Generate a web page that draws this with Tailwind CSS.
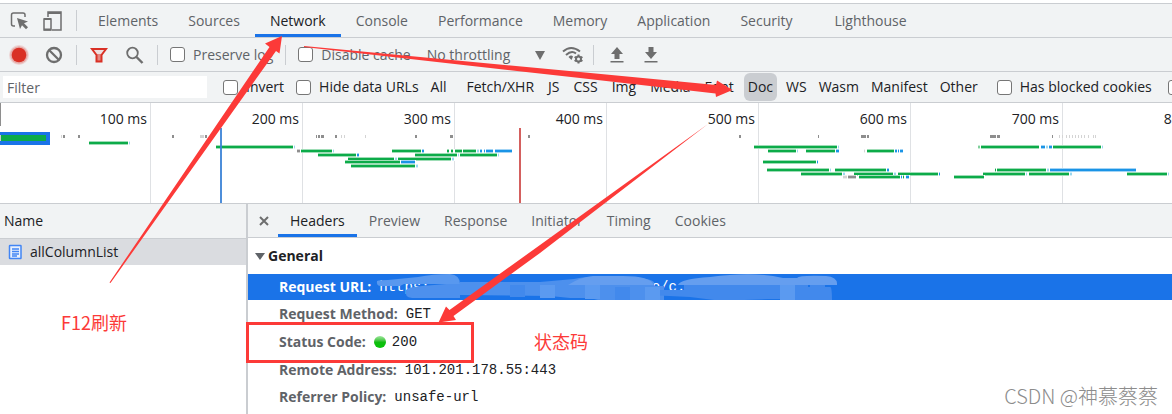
<!DOCTYPE html>
<html lang="zh-CN">
<head>
  <meta charset="UTF-8" />
  <meta name="viewport" content="width=device-width, initial-scale=1.0"/>
  <title>DevTools - Network</title>
  <script src="https://cdn.jsdelivr.net/npm/@tailwindcss/browser@4"></script>
</head>
<body class="relative flex flex-col min-h-screen overflow-x-hidden bg-white pt-[3px] font-['Open_Sans','Noto_Sans_CJK_SC',sans-serif] text-sm leading-5 text-[#202124]">

  <!-- Main tabs -->
  <nav class="flex h-[35px] items-stretch border-y border-[#cacdd1] bg-[#f1f3f4] text-[#5f6368] whitespace-nowrap">
    <button aria-label="Inspect" class="ml-2.5 flex items-center">
      <svg width="20" height="20" viewBox="0 0 20 20" fill="none" stroke="#6e6e6e" stroke-width="1.5">
        <path d="M5 15H3.500Q1.500 15 1.500 13V4Q1.500 2 3.500 2H13Q15 2 15 4V6"/>
        <path d="M7 7l11 3.500-4 1.700 4 4-2 2-4-4L10 18z" fill="#6e6e6e" stroke="none"/>
      </svg>
    </button>
    <button aria-label="Device toolbar" class="ml-3 flex items-center">
      <svg width="22" height="22" viewBox="0 0 22 22" fill="none" stroke="#6e6e6e">
        <path d="M6 7V2h13v18H10" stroke-width="1.500"/>
        <path d="M6 3h13" stroke-width="2"/>
        <rect x="2" y="9" width="7" height="11" stroke-width="1.500"/>
        <path d="M2 9h7M2 19.500h7" stroke-width="2"/>
      </svg>
    </button>
    <span class="ml-3 mr-1.5 my-1.5 w-px bg-[#cacdd1]"></span>
    <button class="px-[15px]">Elements</button>
    <button class="px-[15px]">Sources</button>
    <button class="border-b-3 border-[#1a73e8] px-[15px] pt-[3px] text-[#202124]">Network</button>
    <button class="px-[15px]">Console</button>
    <button class="px-[15px]">Performance</button>
    <button class="px-[15px]">Memory</button>
    <button class="px-[15px]">Application</button>
    <button class="px-[15px]">Security</button>
    <button class="ml-3 px-[15px]">Lighthouse</button>
  </nav>

  <!-- Toolbar -->
  <div class="flex h-[34px] items-center border-b border-[#cacdd1] bg-[#f1f3f4] text-[#5f6368] whitespace-nowrap">
    <button aria-label="Record" class="ml-2">
      <svg width="22" height="22" viewBox="0 0 22 22"><circle cx="11" cy="11" r="10" fill="#d93025" opacity=".15"/><circle cx="11" cy="11" r="8.800" fill="#d93025" opacity=".25"/><circle cx="11" cy="11" r="7.300" fill="#d93025"/></svg>
    </button>
    <button aria-label="Clear" class="ml-3.5">
      <svg width="20" height="20" viewBox="0 0 20 20" fill="none" stroke="#6e6e6e" stroke-width="2.300"><circle cx="10" cy="10" r="7"/><path d="M5 5l10 10"/></svg>
    </button>
    <span class="ml-3 h-5 w-px bg-[#cacdd1]"></span>
    <button aria-label="Filter" class="ml-3">
      <svg width="20" height="20" viewBox="0 0 20 20"><path d="M3 4h14l-4.500 6v6.500h-5V10z" fill="#d93025" fill-opacity=".1" stroke="#d93025" stroke-width="2"/><path d="M6 9h8l-2 2v5H8v-5z" fill="#d93025" opacity=".5"/></svg>
    </button>
    <button aria-label="Search" class="ml-4">
      <svg width="20" height="20" viewBox="0 0 20 20" fill="none" stroke="#6e6e6e"><circle cx="7.500" cy="8" r="5.300" stroke-width="1.800"/><path d="M11.500 12l6 6" stroke-width="2.400"/></svg>
    </button>
    <span class="ml-3 h-5 w-px bg-[#cacdd1]"></span>
    <label class="ml-3 flex items-center gap-2"><input type="checkbox" class="size-[15px] appearance-none rounded-[3px] border border-[#767676] bg-white">Preserve log</label>
    <span class="ml-3 h-5 w-px bg-[#cacdd1]"></span>
    <label class="ml-3 flex items-center gap-2"><input type="checkbox" class="size-[15px] appearance-none rounded-[3px] border border-[#767676] bg-white">Disable cache</label>
    <div class="relative ml-4 w-[118px]">
      <select aria-label="Throttling" class="w-full appearance-none bg-transparent"><option>No throttling</option></select>
      <svg class="pointer-events-none absolute right-0 top-1.5" width="10" height="9" viewBox="0 0 10 9"><path d="M0 0h10L5 9z" fill="#6e6e6e"/></svg>
    </div>
    <button aria-label="Network conditions" class="ml-4">
      <svg width="24" height="20" viewBox="0 0 24 20" fill="none" stroke="#6e6e6e" stroke-width="2">
        <path d="M2 6.500Q10 -.5 19 6.500M5 10Q10.500 5 15 8.500"/>
        <path d="M7.500 12Q10 9.500 12 11.500L10.500 15z" fill="#6e6e6e" stroke="none"/>
        <circle cx="17.500" cy="14" r="2.500"/>
        <path d="M17.500 9.500v2M17.500 16.500v2M13.600 11.800l1.800 1M19.600 15.200l1.800 1M13.600 16.200l1.800-1M19.600 12.800l1.800-1"/>
      </svg>
    </button>
    <span class="ml-2 h-5 w-px bg-[#cacdd1]"></span>
    <button aria-label="Import HAR" class="ml-4">
      <svg width="14" height="16" viewBox="0 0 14 16" fill="#6e6e6e"><path d="M7 0l6 7H9.500v5h-5V7H1zM.5 14h13v1.500H.5z"/></svg>
    </button>
    <button aria-label="Export HAR" class="ml-5">
      <svg width="14" height="16" viewBox="0 0 14 16" fill="#6e6e6e"><path d="M4.500 0h5v5H13l-6 7-6-7h3.500zM.5 14h13v1.500H.5z"/></svg>
    </button>
  </div>

  <!-- Filter bar -->
  <div class="flex h-[31px] items-center overflow-hidden border-b border-[#cacdd1] bg-[#f1f3f4] whitespace-nowrap">
    <input type="text" aria-label="Filter" placeholder="Filter" class="ml-[3px] h-[22px] w-[204px] shrink-0 bg-white px-1 placeholder:text-[#5f6368]">
    <label class="ml-4 flex items-center gap-2"><input type="checkbox" class="size-[15px] appearance-none rounded-[3px] border border-[#767676] bg-white">Invert</label>
    <label class="ml-3 flex items-center gap-2"><input type="checkbox" class="size-[15px] appearance-none rounded-[3px] border border-[#767676] bg-white">Hide data URLs</label>
    <button class="ml-2 px-1">All</button>
    <span class="mx-1.5 h-5 w-0.5 bg-[#cacdd1]"></span>
    <div class="flex items-center gap-1.5">
      <button class="px-1">Fetch/XHR</button>
      <button class="px-1">JS</button>
      <button class="px-1">CSS</button>
      <button class="px-1">Img</button>
      <button class="px-1">Media</button>
      <button class="px-1">Font</button>
      <button class="h-7 rounded-md bg-[#cacdd1] px-1">Doc</button>
      <button class="px-[3px]">WS</button>
      <button class="px-[3px]">Wasm</button>
      <button class="px-[3px]">Manifest</button>
      <button class="px-[3px]">Other</button>
    </div>
    <label class="ml-4 flex items-center gap-2"><input type="checkbox" class="size-[15px] appearance-none rounded-[3px] border border-[#767676] bg-white">Has blocked cookies</label>
    <input type="checkbox" aria-label="Blocked Requests" class="ml-4 size-[15px] shrink-0 appearance-none rounded-[3px] border border-[#767676] bg-white">
  </div>

  <!-- Timeline overview -->
  <div class="relative flex h-[101px] overflow-hidden border-b border-[#cacdd1] bg-white text-right whitespace-nowrap">
    <div class="w-[151px] shrink-0 border-r border-[#dfe1e4] pr-[3px] pt-1.5">100 ms</div>
    <div class="w-[152px] shrink-0 border-r border-[#dfe1e4] pr-[3px] pt-1.5">200 ms</div>
    <div class="w-[152px] shrink-0 border-r border-[#dfe1e4] pr-[3px] pt-1.5">300 ms</div>
    <div class="w-[152px] shrink-0 border-r border-[#dfe1e4] pr-[3px] pt-1.5">400 ms</div>
    <div class="w-[152px] shrink-0 border-r border-[#dfe1e4] pr-[3px] pt-1.5">500 ms</div>
    <div class="w-[152px] shrink-0 border-r border-[#dfe1e4] pr-[3px] pt-1.5">600 ms</div>
    <div class="w-[152px] shrink-0 border-r border-[#dfe1e4] pr-[3px] pt-1.5">700 ms</div>
    <div class="w-[152px] shrink-0 border-r border-[#dfe1e4] pr-[3px] pt-1.5">800 ms</div>
    <svg id="overview" class="absolute left-0 top-0" width="1172" height="100"></svg>
  </div>

  <!-- Requests and details -->
  <div class="flex flex-1">
    <section class="w-[248px] shrink-0 border-r-2 border-[#cacdd1]">
      <div class="flex h-[35px] items-center border-b border-[#cacdd1] bg-[#f1f3f4] px-1">Name</div>
      <a href="#" class="flex h-[26px] items-center gap-2 bg-[#dadce0] pl-2">
        <svg width="14" height="16" viewBox="0 0 14 16" fill="#e8f0fe" stroke="#4285f4" stroke-width="1.500"><rect x="1.500" y="1.500" width="11.500" height="13" rx=".5"/><path d="M4 5h7M4 7.500h7M4 10h7M4 12h5"/></svg>
        allColumnList
      </a>
    </section>

    <section class="flex-1 min-w-0">
      <nav class="flex h-[34px] items-stretch border-b border-[#cacdd1] bg-[#f1f3f4] text-[#5f6368]">
        <button aria-label="Close" class="ml-2.5 mr-2 flex items-center">
          <svg width="12" height="12" viewBox="0 0 12 12" stroke="#6e6e6e" stroke-width="2"><path d="M2 2l8 8M10 2l-8 8"/></svg>
        </button>
        <button class="border-b-3 border-[#1a73e8] px-3 pt-[3px] text-[#202124]">Headers</button>
        <button class="px-3">Preview</button>
        <button class="px-3">Response</button>
        <button class="px-3">Initiator</button>
        <button class="px-3">Timing</button>
        <button class="px-3">Cookies</button>
      </nav>
      <h2 class="flex h-9 items-center gap-[3px] pl-[7px] font-bold">
        <svg width="10" height="7" viewBox="0 0 10 7"><path d="M0 0h10L5 7z" fill="#5f6368"/></svg>
        General
      </h2>
      <dl class="whitespace-nowrap">
        <div class="relative flex h-[26px] items-center gap-2 overflow-hidden bg-[#1a73e8] pl-[31px] text-white">
          <dt class="font-bold">Request URL:</dt>
          <dd class="font-['Liberation_Mono',monospace]">https:<span class="ml-[222px]">e/c.</span></dd>
          <svg class="absolute left-0 top-0" width="600" height="26" fill="#4d90ed">
            <path d="M129 7Q132 6 140 6L170 3Q185 0 202 0Q212 1 212 10H156L152 12H133Q128 12 129 7z" fill="#5898ef"/>
            <path d="M158 16q2-3 16-4l24-2h14V24H164q-8-1-6-8z"/>
            <path d="M212 8h80l34-3Q345 1 370 3q30 0 36 5v4h10v14H350l-8-2h-20l-20-2-90-1z"/>
            <path d="M400 16h36V11H560v2h22q2-1 2 13h-38l-6-1h-20l-24 1h-30l-24-3-42-2z" fill="#4289ec"/>
            <path d="M430 11Q432 5 462 3q45-6 73 1h14q2-3 29-2 12 1 11 9z" fill="#659eef"/>
            <path d="M320 11Q332 3 345 2h30q27 0 31 9z" fill="#659eef"/>
            <path d="M292 11h15v13h-15zM337 11h15v14h-15zM397 13h15v13h-15zM532 11h15v15h-15z" fill="#5b9af0"/>
            <path d="M262 11h15v12h-15zM367 13h15v13h-15zM472 11h18v14h-18zM562 11h15v15h-15z" fill="#4289ec"/>
          </svg>
        </div>
        <div class="flex h-7 items-center gap-2 pl-[31px]"><dt class="font-bold text-[#5f6368]">Request Method:</dt><dd class="font-['Liberation_Mono',monospace]">GET</dd></div>
        <div class="flex h-7 items-center gap-2 pl-[31px]">
          <dt class="font-bold text-[#5f6368]">Status Code:</dt>
          <dd class="flex items-center gap-1.5 font-['Liberation_Mono',monospace]"><span class="size-3 rounded-full bg-linear-to-b from-[#9be79b] via-[#0fbd0f] to-[#08c408]"></span>200</dd>
        </div>
        <div class="flex h-[27px] items-center gap-2 pl-[31px]"><dt class="font-bold text-[#5f6368]">Remote Address:</dt><dd class="font-['Liberation_Mono',monospace]">101.201.178.55:443</dd></div>
        <div class="flex h-[27px] items-center gap-2 pl-[31px]"><dt class="font-bold text-[#5f6368]">Referrer Policy:</dt><dd class="font-['Liberation_Mono',monospace]">unsafe-url</dd></div>
      </dl>
    </section>
  </div>

  <!-- Annotations -->
  <svg class="pointer-events-none absolute left-0 top-0" width="1172" height="414" fill="#fc3a38">
    <path d="M109.500 282.500L269.500 47 265 43.500 282 36 279.500 53.500 276 51 110.500 283z"/>
    <path d="M304 46L580 72 716 85 717 80.500 732.500 90 716 97 715.500 93.500 580 78 304 47z"/>
    <path d="M708 124L540 245 449.500 310 446 306.500 438.500 322.500 456 320 453.500 316 540 253z"/>
    <rect x="247.500" y="323.500" width="225" height="38" fill="none" stroke="#fc3a38" stroke-width="3"/>
  </svg>
  <p class="absolute left-[61px] top-[310px] text-lg leading-6 text-[#fc3a38] font-['Noto_Sans_CJK_SC',sans-serif]">F12刷新</p>
  <p class="absolute left-[534px] top-[329px] text-lg leading-6 text-[#fc3a38] font-['Noto_Sans_CJK_SC',sans-serif]">状态码</p>
  <p class="absolute right-[14px] top-[384px] text-xl leading-6 font-light text-[#8c8c8c] font-['Noto_Sans_CJK_SC',sans-serif]">CSDN @神慕蔡蔡</p>

  <script>
    const overview = document.getElementById("overview");
    const colors = { g: "#0cab49", b: "#1a94e6", l: "#9ad7ee", s: "#8e8e8e", t: "#d4d4d4", p: "#7fd09b" };
    const rowTops = [38, 42, 46, 50, 54, 57, 61, 65, 69, 72];

    // [row, start, end, color]
    const bars = [
      [0, 89, 128, "g"], [0, 129, 130, "l"],
      [1, 216, 293, "g"], [1, 294, 295, "l"], [1, 754, 837, "g"], [1, 838, 839, "l"],
      [1, 978, 981, "p"], [1, 981, 1039, "g"], [1, 1041, 1046, "b"], [1, 1046, 1049, "l"], [1, 1049, 1052, "b"], [1, 1053, 1101, "g"], [1, 1102, 1103, "l"],
      [2, 297, 300, "s"], [2, 301, 333, "g"], [2, 333, 334, "l"], [2, 392, 421, "g"], [2, 422, 424, "b"], [2, 447, 449, "g"], [2, 451, 453, "g"],
      [2, 455, 462, "g"], [2, 463, 476, "g"], [2, 477, 479, "l"], [2, 480, 482, "b"], [2, 484, 485, "b"], [2, 486, 493, "b"], [2, 495, 512, "b"],
      [2, 768, 796, "g"], [2, 797, 798, "l"], [2, 806, 836, "g"], [2, 836, 839, "b"], [2, 864, 865, "t"], [2, 867, 894, "g"], [2, 895, 897, "b"], [2, 898, 899, "b"], [2, 900, 903, "b"],
      [3, 318, 357, "g"], [3, 357, 359, "b"], [3, 415, 457, "g"], [3, 458, 459, "l"], [3, 460, 497, "g"], [3, 498, 499, "l"],
      [4, 348, 394, "g"], [4, 395, 397, "l"], [4, 398, 452, "g"], [4, 452, 454, "l"],
      [5, 345, 400, "g"], [5, 401, 415, "b"], [5, 763, 816, "g"], [5, 817, 818, "b"],
      [6, 351, 416, "g"], [6, 416, 418, "l"],
      [7, 767, 829, "g"], [7, 830, 831, "l"], [7, 835, 886, "g"], [7, 887, 889, "b"], [7, 995, 996, "g"], [7, 997, 1046, "g"], [7, 1047, 1049, "l"], [7, 1050, 1136, "b"],
      [8, 801, 843, "g"], [8, 843, 845, "l"], [8, 854, 894, "g"], [8, 894, 896, "l"], [8, 898, 938, "g"], [8, 939, 940, "b"],
      [8, 983, 1026, "g"], [8, 1026, 1027, "l"], [8, 1029, 1070, "g"], [8, 1070, 1072, "l"], [8, 1127, 1167, "g"], [8, 1168, 1169, "l"],
      [9, 843, 848, "t"], [9, 848, 856, "s"], [9, 859, 900, "g"], [9, 901, 902, "b"], [9, 903, 904, "g"], [9, 906, 909, "b"], [9, 954, 984, "g"]
    ];
    // cached requests: [start, width, color]
    const dots = [
      [61, 1, "t"], [63, 2, "s"], [78, 2, "s"], [172, 2, "s"], [200, 4, "t"], [205, 2, "s"],
      [316, 1, "s"], [318, 2, "s"], [321, 3, "s"], [335, 2, "s"], [341, 1, "t"], [344, 1, "t"], [365, 1, "t"],
      [415, 2, "s"], [450, 3, "s"], [528, 2, "s"], [739, 2, "s"], [818, 1, "s"], [861, 5, "s"], [867, 2, "s"],
      [990, 6, "s"], [997, 3, "s"], [1052, 1, "s"], [1059, 1, "t"], [1062, 1, "t"], [1066, 1, "t"], [1069, 1, "t"], [1072, 1, "t"],
      [1075, 1, "t"], [1078, 1, "t"], [1081, 1, "t"], [1084, 1, "t"], [1088, 1, "t"], [1093, 1, "t"], [1095, 1, "t"]
    ];

    function rect(x, y, w, h, fill, opacity = 1) {
      return `<rect x="${x}" y="${y}" width="${w}" height="${h}" fill="${fill}" opacity="${opacity}"/>`;
    }

    let out = rect(0, 0, 1, 23, "#8e8e8e");
    out += rect(0, 29, 50, 13, "#1a73e8") + rect(1, 32, 45, 6, "#0cab49") + rect(0, 32, 1, 6, "#ccc");
    bars.forEach(([row, start, end, color]) => {
      const y = rowTops[row];
      out += rect(start - 1, y, end - start + 2, 4, "#fff");
      out += rect(start, y, end - start, 4, colors[color], 0.4) + rect(start, y + 1, end - start, 2, colors[color]);
    });
    dots.forEach(([x, w, color]) => {
      out += rect(x, 32, w, 3, colors[color]);
    });
    out += rect(220, 25, 2, 75, "#3b82d6", 0.9) + rect(519, 25, 2, 75, "#cf4f4c", 0.9);
    overview.innerHTML = out;
  </script>
</body>
</html>
